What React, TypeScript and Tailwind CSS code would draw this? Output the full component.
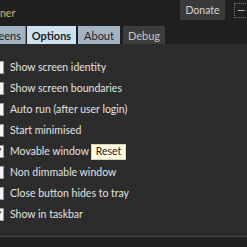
const options = [
  { label: "Show screen identity", checked: false },
  { label: "Show screen boundaries", checked: false },
  { label: "Auto run (after user login)", checked: false },
  { label: "Start minimised", checked: false },
  { label: "Movable window", checked: true, reset: true },
  { label: "Non dimmable window", checked: false },
  { label: "Close button hides to tray", checked: false },
  { label: "Show in taskbar", checked: true },
];

const CheckBox = ({ checked }: { checked: boolean }) => (
  <div className="-ml-[9px] w-[13px] h-[13px] shrink-0 bg-[#f4f4f4] border border-[#9a9a9a] flex items-center justify-center">
    {checked && (
      <svg width="9" height="9" viewBox="0 0 9 9">
        <path d="M1 4.5 L3.5 7 L8 1.5" fill="none" stroke="#555" strokeWidth="1.6" />
      </svg>
    )}
  </div>
);

export default function App() {
  return (
    <div className="w-[247px] h-[247px] overflow-hidden bg-[#1f1f1f] font-['Lato',sans-serif] text-[10.5px] leading-none">
      <div className="flex h-[22px]">
        <span className="w-[180px] shrink-0 mt-[8px] text-[#d8b56c]">ner</span>
        <div className="w-[45px] h-[20px] shrink-0 bg-[#3a3a3a] text-[#d4d4d4] flex items-center justify-center">Donate</div>
        <div className="ml-[9px] mt-[3px] w-[20px] h-[15px] shrink-0 border border-dotted border-[#777] text-[#cfcfcf] flex items-center pl-[2px]">—</div>
      </div>
      <div className="mt-[4px] flex h-[18px] text-[#1e1e1e] text-[11px]">
        <div className="w-[26px] overflow-hidden flex justify-end items-center pr-[4px] bg-[#a4b3c2] border-r border-[#6f7d8a]">Screens</div>
        <div className="ml-[1px] w-[49px] flex items-center justify-center bg-[#cfe1f1] font-bold">Options</div>
        <div className="ml-[2px] w-[42px] flex items-center justify-center bg-[#a4b3c2]">About</div>
        <div className="ml-[3px] w-[42px] flex items-center justify-center bg-[#3c3c3c] text-[#c8c8c8]">Debug</div>
      </div>
      <div className="h-[193px] bg-[#2c2c2c] pt-[13px] border-b border-[#454545]">
        {options.map((o) => (
          <div key={o.label} className="h-[21px] flex items-center">
            <CheckBox checked={o.checked} />
            <span className={`ml-[6px] text-[#e2e2e2] whitespace-nowrap ${o.reset ? "w-[81px] shrink-0" : ""}`}>{o.label}</span>
            {o.reset && (
              <div className="w-[35px] h-[16px] bg-[#fffbe1] border border-[#d8d4b8] text-[#222] flex items-center justify-center">Reset</div>
            )}
          </div>
        ))}
      </div>
    </div>
  );
}
